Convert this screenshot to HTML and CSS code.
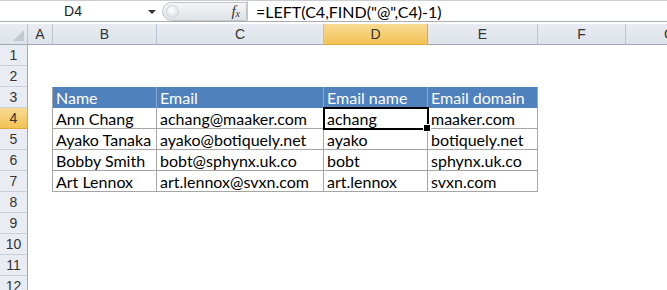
FILE: index.html
```html
<!DOCTYPE html>
<html>
<head>
<meta charset="utf-8">
<title>Email name</title>
<link rel="stylesheet" href="styles.css">
</head>
<body>
<div class="fbar">
	<div class="namebox">D4</div>
	<div class="drop"></div>
	<div class="pill"><span class="knob"></span><span class="fx">f<sub>x</sub></span></div>
	<div class="formula">=LEFT(C4,FIND("@",C4)-1)</div>
</div>
<div class="sheet">
	<div class="ch corner"></div><div class="ch">A</div><div class="ch">B</div><div class="ch">C</div><div class="ch sel">D</div><div class="ch">E</div><div class="ch">F</div><div class="ch">G</div>

	<div class="rh">1</div><div></div><div></div><div></div><div></div><div></div><div></div><div></div>
	<div class="rh">2</div><div></div><div></div><div></div><div></div><div></div><div></div><div></div>

	<div class="rh">3</div><div class="edge"></div><div class="hd">Name</div><div class="hd">Email</div><div class="hd">Email name</div><div class="hd">Email domain</div><div></div><div></div>
	<div class="rh sel">4</div><div class="edge"></div><div class="c">Ann Chang</div><div class="c">achang@maaker.com</div><div class="c active">achang</div><div class="c">maaker.com</div><div></div><div></div>
	<div class="rh">5</div><div class="edge"></div><div class="c">Ayako Tanaka</div><div class="c">ayako@botiquely.net</div><div class="c">ayako</div><div class="c">botiquely.net</div><div></div><div></div>
	<div class="rh">6</div><div class="edge"></div><div class="c">Bobby Smith</div><div class="c">bobt@sphynx.uk.co</div><div class="c">bobt</div><div class="c">sphynx.uk.co</div><div></div><div></div>
	<div class="rh">7</div><div class="edge"></div><div class="c">Art Lennox</div><div class="c">art.lennox@svxn.com</div><div class="c">art.lennox</div><div class="c">svxn.com</div><div></div><div></div>

	<div class="rh">8</div><div></div><div></div><div></div><div></div><div></div><div></div><div></div>
	<div class="rh">9</div><div></div><div></div><div></div><div></div><div></div><div></div><div></div>
	<div class="rh">10</div><div></div><div></div><div></div><div></div><div></div><div></div><div></div>
	<div class="rh">11</div><div></div><div></div><div></div><div></div><div></div><div></div><div></div>
	<div class="rh">12</div><div></div><div></div><div></div><div></div><div></div><div></div><div></div>
</div>
</body>
</html>
```

FILE: styles.css
```css
* {
	margin: 0;
	padding: 0;
	box-sizing: border-box;
}

body {
	width: 667px;
	height: 290px;
	overflow: hidden;
	background: #fff;
	font-family: "Lato", "Liberation Sans", sans-serif;
	color: #000;
}

/* formula bar */
.fbar {
	height: 22px;
	display: flex;
	align-items: center;
	border-top: 1px solid #c9ccd1;
	border-bottom: 1px solid #a9adb3;
	margin-bottom: 2px;
}

.namebox {
	width: 146px;
	text-align: center;
	font-family: "Liberation Sans", sans-serif;
	font-size: 14px;
	color: #222;
}

.drop {
	width: 0;
	height: 0;
	border-left: 4px solid transparent;
	border-right: 4px solid transparent;
	border-top: 4px solid #333;
	margin: 2px 6px 0 2px;
}

.pill {
	width: 85px;
	height: 19px;
	border: 1px solid #c2c6cc;
	border-radius: 10px 0 0 10px;
	background: linear-gradient(#f4f5f7, #dfe2e6);
	display: flex;
	justify-content: space-between;
	align-items: center;
	padding: 0 6px 0 3px;
}

.knob {
	width: 13px;
	height: 13px;
	border-radius: 50%;
	background: radial-gradient(circle at 40% 35%, #ffffff, #d4d8dd);
	border: 1px solid #d0d4da;
}

.fx {
	font-family: "Liberation Serif", serif;
	font-style: italic;
	font-size: 15px;
	color: #333;
	line-height: 1;
}

.fx sub {
	font-size: 10px;
	vertical-align: -1px;
}

.formula {
	flex: 1;
	height: 21px;
	border-left: 1px solid #c2c6cc;
	padding-left: 8px;
	font-size: 16px;
	line-height: 21px;
}

/* grid */
.sheet {
	display: grid;
	grid-template-columns: 28px 25px 104px 167px 104px 110px 88px 88px;
	grid-auto-rows: 21px;
	font-size: 16px;
}

.ch {
	background: linear-gradient(#e9edf2, #dde3ea);
	border-right: 1px solid #bcc4cf;
	border-bottom: 1px solid #9fa8b4;
	text-align: center;
	line-height: 20px;
	font-family: "Liberation Sans", sans-serif;
	font-size: 14px;
	color: #333;
}

.corner {
	position: relative;
}

.corner::after {
	content: "";
	position: absolute;
	right: 3px;
	bottom: 3px;
	border-left: 11px solid transparent;
	border-bottom: 11px solid #c3c9d1;
}

.rh {
	background: #e9edf3;
	border-right: 1px solid #9fa8b4;
	border-bottom: 1px solid #c9d0d9;
	text-align: center;
	line-height: 21px;
	font-family: "Liberation Sans", sans-serif;
	font-size: 14px;
	color: #333;
}

.ch.sel,
.rh.sel {
	background: linear-gradient(#f9dc94, #f1c153);
	border-color: #e2a93a;
}

.edge {
	border-right: 1px solid #a6a6a6;
}

.hd {
	background: #4f81bd;
	color: #fff;
	border-right: 1px solid #86a8d3;
	padding-left: 3px;
	line-height: 21px;
	white-space: nowrap;
}

.hd:nth-child(8n+6) {
	border-right-color: #a6a6a6;
}

.c {
	border-right: 1px solid #a6a6a6;
	border-bottom: 1px solid #a6a6a6;
	padding-left: 3px;
	line-height: 21px;
	white-space: nowrap;
}

.active {
	position: relative;
	outline: 2px solid #000;
	outline-offset: -1px;
	z-index: 1;
}

.active::after {
	content: "";
	position: absolute;
	right: -4px;
	bottom: -4px;
	width: 6px;
	height: 6px;
	background: #000;
	border: 1px solid #fff;
}
```
